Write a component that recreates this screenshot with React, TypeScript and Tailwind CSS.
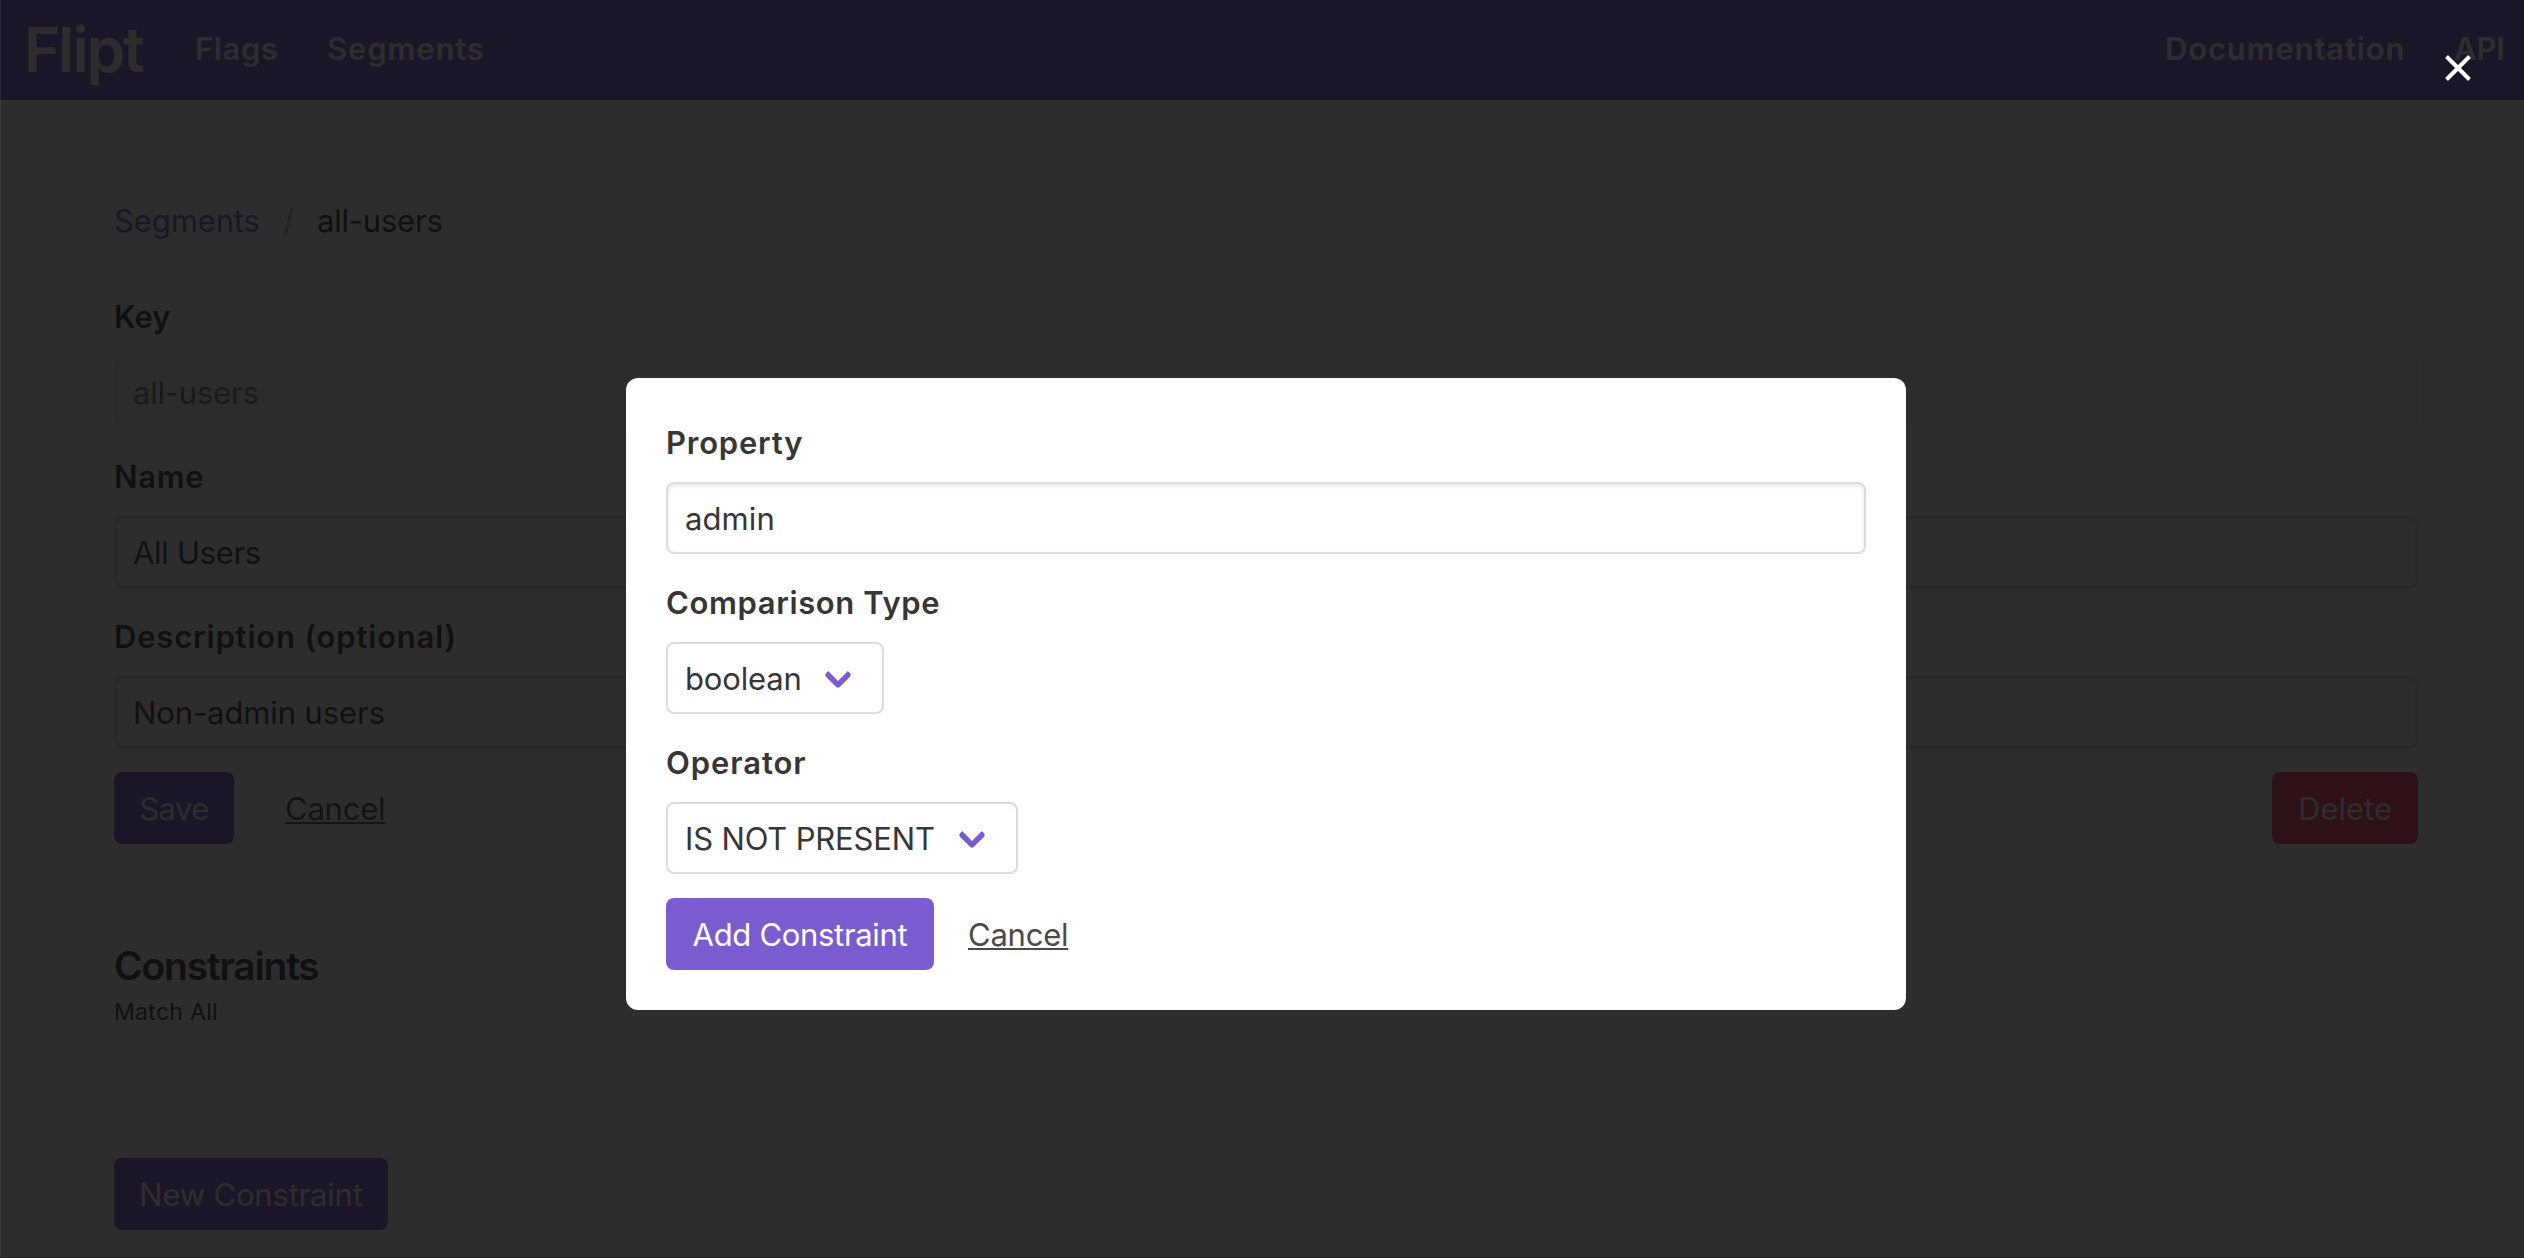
import type { ReactNode } from "react";

function Label({ children, spacing }: { children: ReactNode; spacing: string }) {
  return <label className={`mb-4 block h-12 pt-px font-semibold leading-[48px] ${spacing}`}>{children}</label>;
}

function Input({ value, spacing, disabled = false }: { value: string; spacing: string; disabled?: boolean }) {
  const look = disabled
    ? "border-[#f5f5f5] bg-[#f5f5f5] text-[#7a7a7a]"
    : "border-[#dbdbdb] bg-white shadow-[inset_0_2px_4px_rgba(10,10,10,0.1)]";
  return (
    <div className={`flex h-[72px] items-center rounded-lg border-2 pl-[17px] pt-[3px] ${look} ${spacing}`}>{value}</div>
  );
}

function Select({ value, spacing, width }: { value: string; spacing: string; width: string }) {
  return (
    <div className={`flex h-[72px] items-center justify-between rounded-lg border-2 border-[#dbdbdb] bg-white pl-[17px] pr-[34px] pt-[3px] ${width}`}>
      <span className={spacing}>{value}</span>
      <span className="mb-[10px] size-5 -rotate-45 rounded-[4px] border-b-6 border-l-6 border-[#7a5cd0]" />
    </div>
  );
}

function Button({ children, look }: { children: ReactNode; look: string }) {
  return (
    <button className={`flex h-[72px] items-center justify-center rounded-lg pt-[3px] text-white ${look}`}>{children}</button>
  );
}

function Cancel() {
  return (
    <a className="pt-[3px] tracking-[-0.23px] text-[#4a4a4a] underline decoration-2 underline-offset-[1.5px] [text-decoration-skip-ink:none]">
      Cancel
    </a>
  );
}

export default function App() {
  return (
    <div className="relative h-[1258px] w-[2524px] overflow-hidden bg-white font-['Inter',sans-serif] text-[31px] text-[#363636]">
      <nav className="flex h-[100px] items-center bg-[#7a5cd0] pl-6 pr-5 font-semibold leading-[48px] text-white">
        <span className="w-[171px] pb-px text-[62px] tracking-[-2.15px]">Flipt</span>
        <span className="w-[132px] pb-0.5 tracking-[0.62px]">Flags</span>
        <span className="pb-0.5 tracking-[0.85px]">Segments</span>
        <span className="ml-auto w-[289px] pb-0.5 tracking-[0.84px]">Documentation</span>
        <span className="w-[50px] pb-0.5 tracking-[-0.12px]">API</span>
      </nav>

      <main className="ml-[114px] w-[2304px] pt-[97px]">
        <div className="mb-[47px] flex h-12 leading-[48px]">
          <span className="w-[169px] tracking-[-0.11px] text-[#7a5cd0]">Segments</span>
          <span className="w-[34px] text-[#b5b5b5]">/</span>
          <span className="tracking-[-0.21px]">all-users</span>
        </div>

        <div className="flex flex-col gap-6">
          <div>
            <Label spacing="tracking-[-0.01px]">Key</Label>
            <Input value="all-users" spacing="tracking-[-0.21px]" disabled />
          </div>
          <div>
            <Label spacing="tracking-[0.7px]">Name</Label>
            <Input value="All Users" spacing="tracking-[-0.31px]" />
          </div>
          <div>
            <Label spacing="tracking-[0.82px]">Description (optional)</Label>
            <Input value="Non-admin users" spacing="tracking-[-0.1px]" />
          </div>
          <div className="flex items-center">
            <Button look="mr-[51px] w-[120px] bg-[#7a5cd0] tracking-[-0.5px]">Save</Button>
            <Cancel />
            <Button look="ml-auto w-[146px] bg-[#ff3860]">Delete</Button>
          </div>
        </div>

        <h2 className="mt-[99px] h-[45px] text-[39px] font-semibold leading-[45px] tracking-[-1.22px]">Constraints</h2>
        <p className="mt-[6px] h-9 text-[23px] leading-9 tracking-[0.3px]">Match All</p>
        <div className="mt-32">
          <Button look="w-[274px] bg-[#7a5cd0] tracking-[-0.19px]">New Constraint</Button>
        </div>
      </main>

      <div className="absolute inset-0 border-b border-[#282828] bg-[rgba(11,11,11,0.86)]">
        <div className="absolute inset-y-0 left-0 w-px bg-white/8" />
        <svg className="absolute left-[2445px] top-[55px] size-[26px]" viewBox="0 0 26 26" stroke="#fff" strokeWidth="4">
          <path d="M1.5 1.5 24.5 24.5M24.5 1.5 1.5 24.5" />
        </svg>
        <section className="ml-[626px] mt-[378px] h-[632px] w-[1280px] rounded-xl bg-white p-10">
          <Label spacing="tracking-[0.79px]">Property</Label>
          <Input value="admin" spacing="tracking-[0.1px]" />
          <div className="h-6" />
          <Label spacing="tracking-[0.62px]">Comparison Type</Label>
          <Select value="boolean" spacing="tracking-[-0.16px]" width="w-[218px]" />
          <div className="h-6" />
          <Label spacing="tracking-[0.92px]">Operator</Label>
          <Select value="IS NOT PRESENT" spacing="tracking-[-0.16px]" width="w-[352px]" />
          <div className="mt-6 flex items-center">
            <Button look="mr-[34px] w-[268px] bg-[#7a5cd0] tracking-[-0.31px]">Add Constraint</Button>
            <Cancel />
          </div>
        </section>
      </div>
    </div>
  );
}
